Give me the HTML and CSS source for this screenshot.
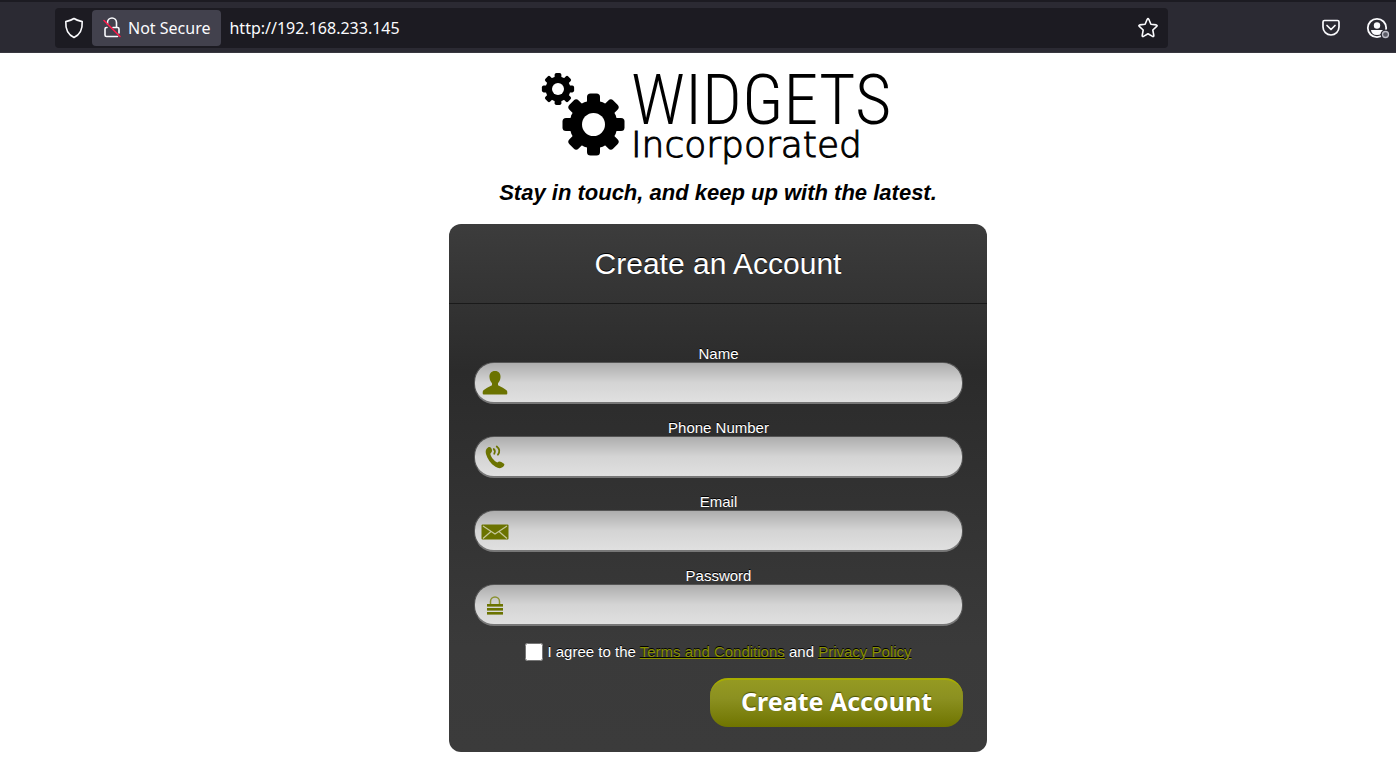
FILE: index.html
```html
<!DOCTYPE html>
<html lang="en">
<head>
  <meta charset="UTF-8" />
  <meta name="viewport" content="width=device-width, initial-scale=1.0" />
  <title>Widgets Incorporated</title>
  <link rel="stylesheet" href="styles.css">
</head>
<body>

  <!-- Browser bar -->
  <header class="toolbar">
    <div class="urlbar">
      <button type="button" class="icon-btn" aria-label="Tracking protection">
        <svg width="20" height="22" viewBox="0 0 20 22" fill="none" stroke="#fbfbfe" stroke-width="1.6" stroke-linejoin="round">
          <path d="M10 1.5C12 3 15.500 4 18.200 4.600C18.600 12 16.500 17.500 10 20.500C3.500 17.500 1.400 12 1.800 4.600C4.500 4 8 3 10 1.500Z"/>
        </svg>
      </button>
      <button type="button" class="not-secure">
        <svg width="20" height="22" viewBox="0 0 20 22" fill="none" stroke="#fbfbfe" stroke-width="1.6" stroke-linecap="round">
          <path d="M5.500 7V5.500a4.500 4.500 0 0 1 9 0V10M11 10.500h4.500q1.500 0 1.500 1.500v4M5 10.500h-.5q-1.500 0-1.500 1.500v6q0 1.500 1.500 1.500H15.500"/>
          <path d="M2 3.500L18 19.500" stroke="#ff1a4a"/>
        </svg>
        <span>Not Secure</span>
      </button>
      <input class="address" type="text" value="http://192.168.233.145" aria-label="Address">
      <button type="button" class="icon-btn" aria-label="Bookmark">
        <svg width="22" height="22" viewBox="0 0 22 22" fill="none" stroke="#fbfbfe" stroke-width="1.6" stroke-linejoin="round">
          <path d="M10.200 2.300Q11 1 11.800 2.300L13.900 7.200L19.300 7.900Q20.700 8.300 19.700 9.400L15.800 13L16.800 18.500Q16.800 20 15.500 19.400L11 16.800L6.500 19.400Q5.200 20 5.200 18.500L6.200 13L2.300 9.400Q1.300 8.300 2.700 7.900L8.100 7.200Z"/>
        </svg>
      </button>
    </div>
    <div class="tools">
      <button type="button" class="icon-btn" aria-label="Pocket">
        <svg width="20" height="20" viewBox="0 0 20 20" fill="none" stroke="#fbfbfe" stroke-width="1.700" stroke-linecap="round" stroke-linejoin="round">
          <path d="M3.500 2.500h13q1.500 0 1.500 1.500v5a8 8 0 0 1-16 0V4q0-1.500 1.500-1.500Z"/>
          <path d="M6 7.500l4 4 4-4"/>
        </svg>
      </button>
      <button type="button" class="icon-btn" aria-label="Account">
        <svg width="24" height="22" viewBox="0 0 24 22" fill="none">
          <circle cx="11" cy="11" r="9.200" stroke="#fbfbfe" stroke-width="1.800"/>
          <circle cx="11" cy="8.500" r="3.200" fill="#fbfbfe"/>
          <path d="M5 13h12q-.5 5-6 5t-6-5Z" fill="#fbfbfe"/>
          <circle cx="19.500" cy="17.500" r="5" fill="#2b2a33"/>
          <circle cx="19.500" cy="17.500" r="3" fill="#5b5b66" stroke="#bfbfc9" stroke-width="1.300"/>
        </svg>
      </button>
    </div>
  </header>

  <main class="page">
    <div class="logo">
      <svg class="gears" width="84" height="86" viewBox="0 0 84 86" aria-hidden="true">
        <defs>
          <g id="gear">
            <circle r="24"/>
            <g id="teeth">
              <rect x="-6.500" y="-31" width="13" height="62" rx="3.500"/>
              <rect x="-31" y="-6.500" width="62" height="13" rx="3.500"/>
            </g>
            <use href="#teeth" transform="rotate(45)"/>
            <circle r="11.500" fill="#fff"/>
          </g>
        </defs>
        <use href="#gear" transform="translate(52.500 53.500)"/>
        <use href="#gear" transform="translate(17 18) scale(.52)"/>
      </svg>
      <div class="logo-text">
        <span class="logo-name">WIDGETS</span>
        <span class="logo-sub">Incorporated</span>
      </div>
    </div>
    <h2 class="tagline">Stay in touch, and keep up with the latest.</h2>

    <form class="card">
      <h1 class="card-title">Create an Account</h1>

      <div class="card-body">
        <div class="field">
          <label for="name">Name</label>
          <div class="box">
            <svg width="28" height="28" viewBox="0 0 28 28" fill="#6b7300">
              <path d="M14 2c3.800 0 5.800 2.600 5.500 6.300c-.2 2.700-1.200 4.600-2.500 5.900v2c3 1.800 7 3.300 8.800 5.300q.7 1 .5 3q0 1-1 1H2.700q-1 0-1-1q-.2-2 .5-3c1.800-2 5.800-3.500 8.800-5.300v-2c-1.300-1.300-2.300-3.200-2.500-5.900C8.200 4.600 10.200 2 14 2Z"/>
            </svg>
            <input type="text" id="name" name="name">
          </div>
        </div>

        <div class="field">
          <label for="phone">Phone Number</label>
          <div class="box">
            <svg width="28" height="28" viewBox="0 0 28 28" fill="#6b7300">
              <path d="M7 4.500C9 3.200 10.800 5 11 7.300c.1 1.800-.9 2.500-1.700 3.400c.5 3 3.700 7.200 7 8.700c1.200-1 2.400-1.400 4-.4l2.700 1.800q1 1-.2 2.300c-2.300 2.700-5.300 2.500-8.300.7C9.500 20.800 6.300 15.800 5 11C4.300 8 4.700 6 7 4.500Z"/>
              <path d="M12.700 6q2.200 2 .5 4.800M15.700 3.500q4.500 3.500 1.200 8.200" fill="none" stroke="#6b7300" stroke-width="1.700" stroke-linecap="round"/>
            </svg>
            <input type="tel" id="phone" name="phone">
          </div>
        </div>

        <div class="field">
          <label for="email">Email</label>
          <div class="box">
            <svg width="28" height="28" viewBox="0 0 28 28">
              <rect x="0.500" y="7.500" width="27" height="15" rx="1" fill="#6b7300"/>
              <path d="M2 9l12 8 12-8M2 21.500l8-7M26 21.500l-8-7" fill="none" stroke="#c5c79a" stroke-width="1.200"/>
            </svg>
            <input type="email" id="email" name="email">
          </div>
        </div>

        <div class="field">
          <label for="password">Password</label>
          <div class="box">
            <svg width="28" height="28" viewBox="0 0 28 28" fill="#6b7300">
              <path d="M9.500 13V10.500a4.500 4.500 0 0 1 9 0V13" fill="none" stroke="#8a9130" stroke-width="1.500"/>
              <rect x="6" y="13" width="16" height="2.600"/>
              <rect x="6" y="17" width="16" height="2.600"/>
              <rect x="6" y="21" width="16" height="2.600"/>
            </svg>
            <input type="password" id="password" name="password">
          </div>
        </div>

        <div class="terms">
          <input type="checkbox" id="agree" name="agree">
          <label for="agree">I agree to the <a href="#terms">Terms and Conditions</a> and <a href="#privacy">Privacy Policy</a></label>
        </div>

        <div class="button-container">
          <button type="submit" class="btn-create">Create Account</button>
        </div>
      </div>
    </form>
  </main>

</body>
</html>
```
FILE: styles.css
```css
* {
  box-sizing: border-box;
}
body {
  font-family: "Liberation Sans", Arial, sans-serif;
  font-size: 15px;
  background-color: #fff;
  color: #000;
  margin: 0;
}
button, input {
  font: inherit;
}

/* Browser bar */
.toolbar {
  display: flex;
  align-items: center;
  justify-content: space-between;
  background-color: #2b2a33;
  border-top: 2px solid #1c1b22;
  border-bottom: 1px solid #38373f;
  height: 53px;
  padding: 2px 6px 0 55px;
  font-family: "Noto Sans", "Open Sans", sans-serif;
  font-size: 16px;
}
.urlbar {
  display: flex;
  flex: 0 1 1113px;
  align-items: center;
  background-color: #1c1b22;
  border-radius: 4px;
  height: 40px;
  padding: 0 9px;
}
.icon-btn {
  display: flex;
  padding: 0;
  border: none;
  background: none;
}
.not-secure {
  display: flex;
  align-items: center;
  gap: 6px;
  height: 36px;
  margin-left: 8px;
  padding: 0 11px 0 10px;
  border: none;
  border-radius: 4px;
  background-color: #42414d;
  color: #fbfbfe;
  white-space: nowrap;
}
.address {
  flex: 1;
  min-width: 0;
  padding: 0 8px;
  border: none;
  outline: none;
  background: none;
  color: #fbfbfe;
}
.tools {
  display: flex;
  align-items: center;
  gap: 25px;
}

/* Page */
.page {
  display: flex;
  flex-direction: column;
  align-items: center;
  padding: 16px 0 32px 40px;
}
.logo {
  display: flex;
  gap: 6px;
  height: 92px;
}
.gears {
  margin-top: 2px;
}
.logo-text {
  display: flex;
  flex-direction: column;
  width: 264px;
}
.logo-name {
  font-family: "Roboto Condensed", Roboto, sans-serif;
  font-weight: 300;
  font-size: 70px;
  line-height: 62px;
}
.logo-sub {
  font-family: "DejaVu Sans Light", "DejaVu Sans ExtraLight", "DejaVu Sans", sans-serif;
  font-weight: 200;
  font-size: 36px;
  line-height: 28px;
  -webkit-text-stroke: 1px #000;
}
.tagline {
  margin: 17px 0;
  font-size: 22px;
  line-height: 29px;
  font-style: italic;
}

.card {
  width: 100%;
  max-width: 538px;
  border-radius: 12px;
  background: linear-gradient(#3c3c3c, #2b2b2b 28%, #3a3a3a 80%, #3b3b3b);
  color: #fff;
  text-align: center;
  text-shadow: 0 -1px 0 #000;
}
.card-title {
  margin: 0;
  border-bottom: 1px solid #1a1a1a;
  font-size: 30px;
  font-weight: normal;
  line-height: 79px;
}
.card-body {
  padding: 41px 24px 25px 25px;
}
.field {
  margin-bottom: 15px;
}
.field label {
  display: block;
  line-height: 17px;
}
.box {
  display: flex;
  align-items: center;
  height: 42px;
  padding: 0 16px 0 6px;
  border: 1px solid #555;
  border-bottom: 2px solid #777;
  border-radius: 20px;
  background: linear-gradient(#adadad, #d4d4d4 50%, #e0e0e0);
}
.box input {
  flex: 1;
  min-width: 0;
  padding: 0 8px;
  border: none;
  outline: none;
  background: none;
}
.terms {
  display: flex;
  align-items: center;
  justify-content: center;
  gap: 4px;
  margin-top: 17px;
  line-height: 18px;
}
.terms input {
  width: 18px;
  height: 18px;
  margin: 0;
}
.terms a {
  color: #8a9100;
}
.button-container {
  text-align: right;
  margin-top: 17px;
}
.btn-create {
  height: 49px;
  padding: 0 31px 5px;
  border: none;
  border-top: 2px solid #a8ad00;
  border-radius: 18px;
  background: linear-gradient(#959a22, #8b9020 40%, #6f7400);
  color: #fff;
  font-family: "Noto Sans", "Open Sans", sans-serif;
  font-size: 25px;
  font-weight: bold;
  line-height: 34px;
  text-shadow: 0 -1px 1px #4c5000;
  cursor: pointer;
}
```
